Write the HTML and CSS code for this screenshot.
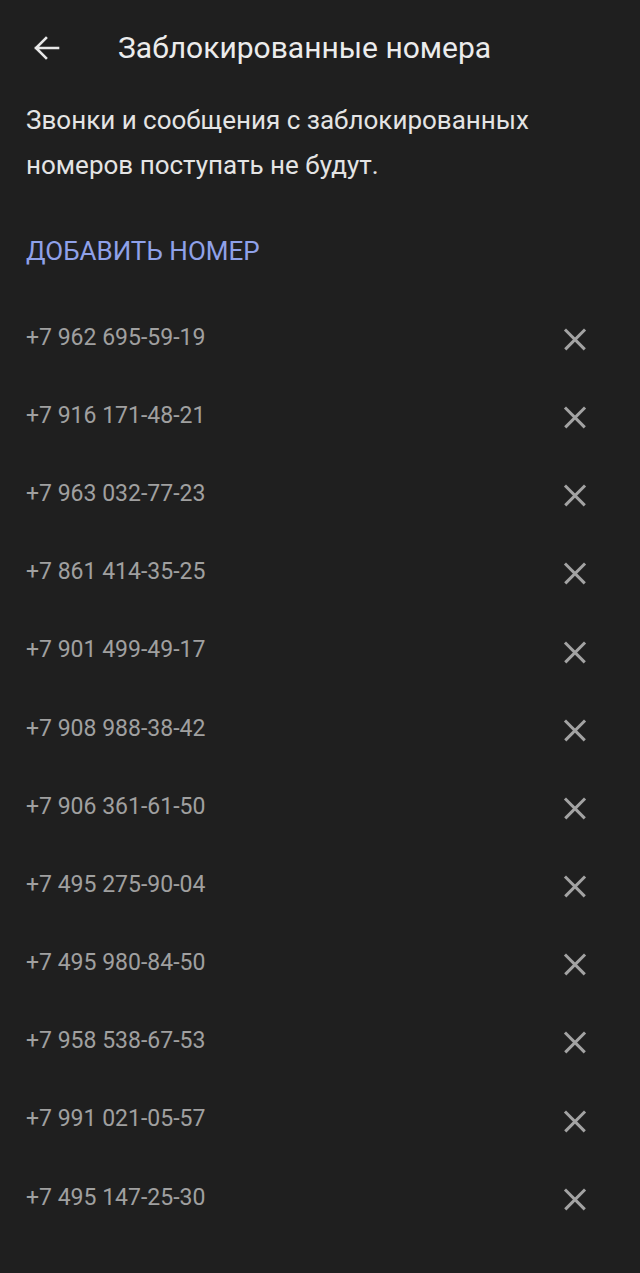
FILE: index.html
```html
<!DOCTYPE html>
<html lang="ru">
<head>
<meta charset="utf-8">
<link rel="stylesheet" href="styles.css">
</head>
<body>
<div class="screen">
  <header class="topbar">
    <svg class="back" width="28" height="28" viewBox="0 0 28 28"><path d="M26 14H4M14 4L4 14l10 10" fill="none" stroke="#e8e8e8" stroke-width="2.6" stroke-linecap="square"/></svg>
    <h1 class="title">Заблокированные номера</h1>
  </header>
  <p class="desc">Звонки и сообщения с заблокированных<br>номеров поступать не будут.</p>
  <div class="add">ДОБАВИТЬ НОМЕР</div>
  <ul class="list">
    <li class="row"><span class="num">+7 962 695-59-19</span><span class="x"></span></li>
    <li class="row"><span class="num">+7 916 171-48-21</span><span class="x"></span></li>
    <li class="row"><span class="num">+7 963 032-77-23</span><span class="x"></span></li>
    <li class="row"><span class="num">+7 861 414-35-25</span><span class="x"></span></li>
    <li class="row"><span class="num">+7 901 499-49-17</span><span class="x"></span></li>
    <li class="row"><span class="num">+7 908 988-38-42</span><span class="x"></span></li>
    <li class="row"><span class="num">+7 906 361-61-50</span><span class="x"></span></li>
    <li class="row"><span class="num">+7 495 275-90-04</span><span class="x"></span></li>
    <li class="row"><span class="num">+7 495 980-84-50</span><span class="x"></span></li>
    <li class="row"><span class="num">+7 958 538-67-53</span><span class="x"></span></li>
    <li class="row"><span class="num">+7 991 021-05-57</span><span class="x"></span></li>
    <li class="row"><span class="num">+7 495 147-25-30</span><span class="x"></span></li>
  </ul>
</div>
</body>
</html>
```

FILE: styles.css
```css
html, body {
  margin: 0;
  padding: 0;
  background: #1f1f1f;
}
body {
  font-family: Roboto, "Noto Sans", sans-serif;
  color: #e6e6e6;
}
.screen {
  width: 640px;
  height: 1273px;
  overflow: hidden;
}
.topbar {
  height: 98px;
  display: flex;
  align-items: center;
  padding-left: 32px;
}
.back {
  display: block;
  margin-top: -2px;
}
.title {
  margin: -3px 0 0 58px;
  font-size: 30px;
  font-weight: 400;
  color: #ececec;
  white-space: nowrap;
}
.desc {
  margin: 0;
  padding: 0 26px;
  font-size: 26px;
  line-height: 45px;
  color: #e4e4e4;
  white-space: nowrap;
}
.add {
  margin-top: 43px;
  padding-left: 26px;
  font-size: 26px;
  line-height: 40px;
  color: #8fa1e9;
}
.list {
  list-style: none;
  margin: 27px 0 0;
  padding: 0;
}
.row {
  height: 78.2px;
  display: flex;
  align-items: center;
  justify-content: space-between;
  padding: 0 53px 0 26px;
}
.num {
  font-size: 23px;
  color: #a0a0a0;
  white-space: nowrap;
}
.x {
  position: relative;
  width: 24px;
  height: 24px;
  margin-top: 4px;
}
.x::before, .x::after {
  content: "";
  position: absolute;
  left: -2px;
  top: 10.7px;
  width: 28px;
  height: 2.6px;
  background: #a3a3a3;
  transform: rotate(45deg);
}
.x::after {
  transform: rotate(-45deg);
}
```
